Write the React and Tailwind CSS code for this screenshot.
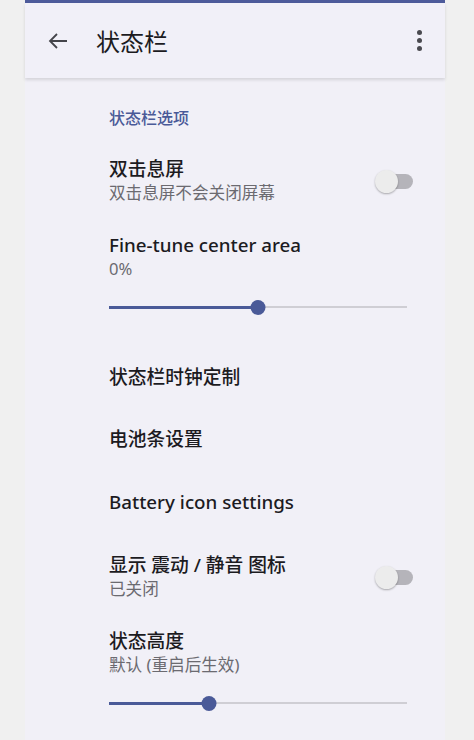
const font = { fontFamily: '"Noto Sans", "Noto Sans CJK SC", sans-serif' }

function Toggle() {
  return (
    <div className="relative w-[38px] h-[24px] flex items-center">
      <div className="absolute right-0 w-[30px] h-[15px] rounded-full bg-[#b5b4ba]" />
      <div className="absolute left-0 w-[23px] h-[23px] rounded-full bg-[#ececec] shadow-[0_1px_2px_rgba(0,0,0,0.3)]" />
    </div>
  )
}

function Slider({ pct }) {
  return (
    <div className="relative h-[16px] flex items-center">
      <div className="w-full h-[2px] bg-[#cfced4]" />
      <div className="absolute left-0 h-[3px] bg-[#4a5a98]" style={{ width: `${pct}%` }} />
      <div
        className="absolute w-[15px] h-[15px] rounded-full bg-[#4a5a98] -translate-x-1/2"
        style={{ left: `${pct}%` }}
      />
    </div>
  )
}

function Row({ title, summary, toggle, className = '' }) {
  return (
    <div className={`flex items-center pr-[32px] ${className}`}>
      <div className="flex-1">
        <div className="text-[18.75px] leading-[24px] text-[#1c1b1f] font-medium">{title}</div>
        {summary && <div className="text-[16.6px] leading-[24px] text-[#6b6a70]">{summary}</div>}
      </div>
      {toggle && <Toggle />}
    </div>
  )
}

export default function App() {
  return (
    <div className="min-h-screen bg-[#f0f0f0] flex" style={font}>
      <div className="ml-[25px] w-[420px] min-h-screen bg-[#f1f0f7]">
        <div className="h-[3px] bg-[#4d5b9b]" />
        <div className="h-[75px] flex items-center bg-[#f1f0f8] shadow-[0_2px_3px_rgba(0,0,0,0.12)] relative">
          <svg className="ml-[21px] w-[24px] h-[24px]" viewBox="0 0 24 24" fill="none" stroke="#44444a" strokeWidth="1.8">
            <path d="M21 12H4M11 5l-7 7 7 7" />
          </svg>
          <div className="ml-[26px] text-[24px] leading-[32px] pt-[3px] text-[#1c1b1f]">状态栏</div>
          <div className="ml-auto mr-[23px] flex flex-col gap-[3px]">
            <span className="w-[5px] h-[5px] rounded-full bg-[#4a4a50]" />
            <span className="w-[5px] h-[5px] rounded-full bg-[#4a4a50]" />
            <span className="w-[5px] h-[5px] rounded-full bg-[#4a4a50]" />
          </div>
        </div>
        <div className="pl-[84px]">
          <div className="pt-[29px] text-[16px] leading-[22px] text-[#4a5a98] font-medium">状态栏选项</div>
          <Row className="mt-[28px]" title="双击息屏" summary="双击息屏不会关闭屏幕" toggle />
          <Row className="mt-[28px]" title="Fine-tune center area" summary="0%" />
          <div className="pr-[38px] mt-[18px]">
            <Slider pct={50} />
          </div>
          <Row className="mt-[50px]" title="状态栏时钟定制" />
          <Row className="mt-[38px]" title="电池条设置" />
          <Row className="mt-[39px]" title="Battery icon settings" />
          <Row className="mt-[39px]" title="显示 震动 / 静音 图标" summary="已关闭" toggle />
          <Row className="mt-[28px]" title="状态高度" summary="默认 (重启后生效)" />
          <div className="pr-[38px] mt-[18px]">
            <Slider pct={33.5} />
          </div>
        </div>
      </div>
    </div>
  )
}
